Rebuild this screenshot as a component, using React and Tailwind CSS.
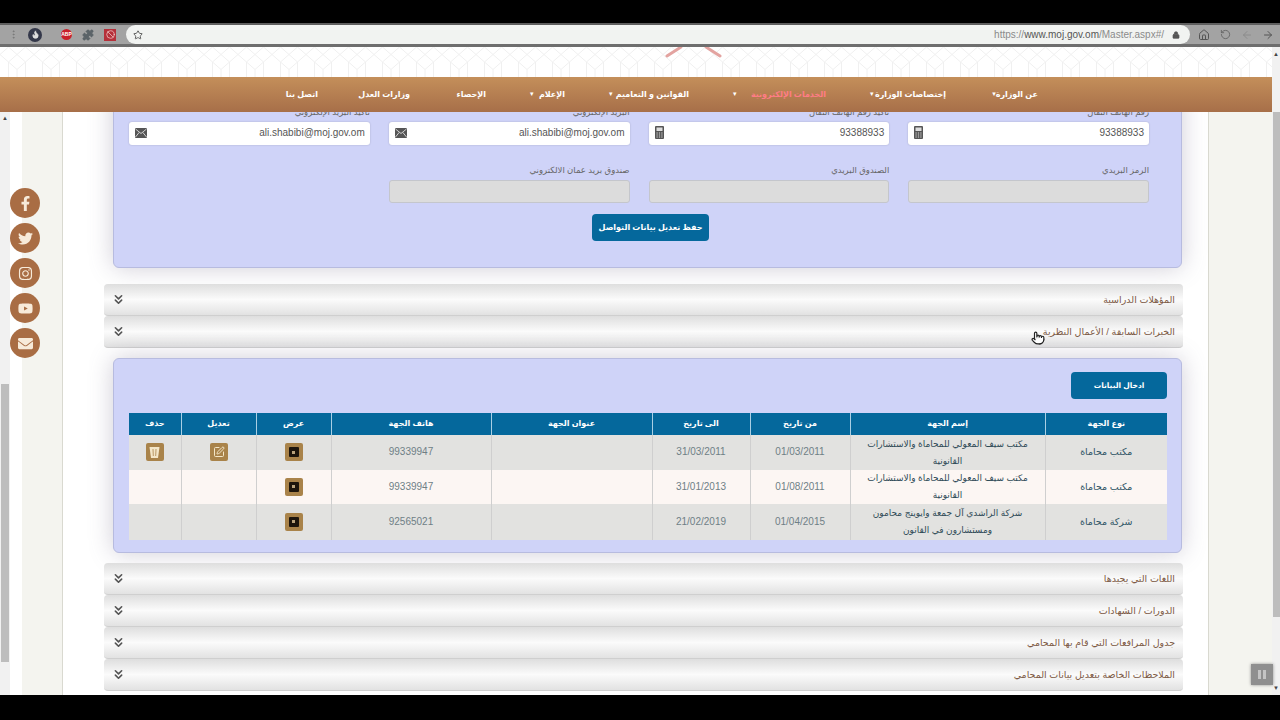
import { ArrowLeft, ArrowRight, Ban, ChevronsDown, EllipsisVertical, Flame, House, Lock, Pointer, Puzzle, RotateCcw, SquarePen, Star } from "lucide-react";
import { FaEnvelope, FaFacebookF, FaInstagram, FaTwitter, FaYoutube } from "react-icons/fa";

const navItems = [
  { label: "عن الوزارة", arrow: true, width: "w-[45px]", color: "text-white" },
  { label: "إختصاصات الوزارة", arrow: true, width: "w-[76px]", color: "text-white" },
  { label: "الخدمات الإلكترونية", arrow: true, width: "w-[93px]", color: "text-[#ff7c86]" },
  { label: "القوانين و التعاميم", arrow: true, width: "w-[80px]", color: "text-white" },
  { label: "الإعلام", arrow: true, width: "w-[35px]", color: "text-white" },
  { label: "الإحصاء", arrow: false, width: "w-[32px]", color: "text-white" },
  { label: "وزارات العدل", arrow: false, width: "w-[48px]", color: "text-white" },
  { label: "اتصل بنا", arrow: false, width: "w-[34px]", color: "text-white" },
];

const contactFields = [
  { label: "رقم الهاتف النقال", value: "93388933", icon: "phone" },
  { label: "تأكيد رقم الهاتف النقال", value: "93388933", icon: "phone" },
  { label: "البريد الإلكتروني", value: "ali.shabibi@moj.gov.om", icon: "mail" },
  { label: "تأكيد البريد الإلكتروني", value: "ali.shabibi@moj.gov.om", icon: "mail" },
];

const postFields = ["الرمز البريدي", "الصندوق البريدي", "صندوق بريد عمان الالكتروني"];

const headers = ["نوع الجهة", "إسم الجهة", "من تاريخ", "الى تاريخ", "عنوان الجهة", "هاتف الجهة", "عرض", "تعديل", "حذف"];

const rows = [
  {
    type: "مكتب محاماة",
    name: "مكتب سيف المعولي للمحاماة والاستشارات القانونية",
    from: "01/03/2011",
    to: "31/03/2011",
    phone: "99339947",
    editable: true,
    bg: "bg-[#e2e2e0]",
    height: "h-[35px]",
  },
  {
    type: "مكتب محاماة",
    name: "مكتب سيف المعولي للمحاماة والاستشارات القانونية",
    from: "01/08/2011",
    to: "31/01/2013",
    phone: "99339947",
    editable: false,
    bg: "bg-[#fcf6f3]",
    height: "h-[34px]",
  },
  {
    type: "شركة محاماة",
    name: "شركة الراشدي آل جمعة وايوينج محامون ومستشارون في القانون",
    from: "01/04/2015",
    to: "21/02/2019",
    phone: "92565021",
    editable: false,
    bg: "bg-[#e2e2e0]",
    height: "h-[36px]",
  },
];

const socials = [FaFacebookF, FaTwitter, FaInstagram, FaYoutube, FaEnvelope];

function PatternStrip() {
  return (
    <svg className="h-full w-full" aria-hidden="true">
      <defs>
        <pattern id="stars" width="34" height="30" patternUnits="userSpaceOnUse">
          <path
            d="M0 7.5 L8.5 0 L17 7.5 L25.5 0 L34 7.5 M0 7.5 L8.5 15 L17 7.5 L25.5 15 L34 7.5 M8.5 15 V30 M25.5 15 V30 M8.5 15 L17 22.5 L25.5 15 M17 22.5 V30"
            fill="none"
            stroke="#f0f0f0"
            strokeWidth="1"
          />
        </pattern>
      </defs>
      <rect width="100%" height="100%" fill="url(#stars)" />
      <path d="M667 9 L681 0 M720 9 L706 0" stroke="#e3a3a0" strokeWidth="3" strokeLinecap="round" />
    </svg>
  );
}

function MailIcon() {
  return (
    <svg width="12" height="10" viewBox="0 0 12 10" aria-hidden="true">
      <rect width="12" height="10" rx="1" fill="#555" />
      <path d="M0.5 1 L6 5.5 L11.5 1 M0.5 9 L4.2 4.4 M11.5 9 L7.8 4.4" fill="none" stroke="#ddd" strokeWidth="0.9" />
    </svg>
  );
}

function PhoneIcon() {
  return (
    <svg width="9" height="13" viewBox="0 0 9 13" aria-hidden="true">
      <rect width="9" height="13" rx="1" fill="#555" />
      <rect x="1.5" y="1.5" width="6" height="3.5" fill="#ddd" />
      <path d="M1.5 7 H7.5 M1.5 9 H7.5 M1.5 11 H7.5" stroke="#ddd" strokeDasharray="1.2 1.2" />
    </svg>
  );
}

function Panel({ className, children }) {
  return (
    <div
      className={`ml-[9px] mr-[1px] rounded-md border border-[#b7bbdf] bg-[#cfd3f8] shadow-[0_0_24px_rgba(110,100,130,0.32)] ${className}`}
    >
      {children}
    </div>
  );
}

function AccordionRow({ title }) {
  return (
    <div className="flex h-8 items-center justify-between rounded-[4px] border-b border-[#cfcfcf] bg-gradient-to-b from-[#dedede] via-[#fbfbfb] to-[#e2e2e2] pl-[7px] pr-[8px]">
      <ChevronsDown size={15} strokeWidth={2.6} className="text-[#555]" />
      <span dir="rtl" className="pt-px text-[9.5px] text-[#7d5a45]">
        {title}
      </span>
    </div>
  );
}

function ActionButton({ kind }) {
  return (
    <div className="mx-auto flex h-[18px] w-[18px] items-center justify-center rounded-[2px] bg-[#a9834a]">
      {kind === "view" && (
        <div className="flex h-[10px] w-[10px] items-center justify-center rounded-[1px] bg-[#1d150c]">
          <div className="h-[3px] w-[3px] bg-[#b9a27c]" />
        </div>
      )}
      {kind === "edit" && <SquarePen size={12} strokeWidth={2} className="text-[#f3e6c8]" />}
      {kind === "delete" && (
        <svg width="11" height="12" viewBox="0 0 11 12" aria-hidden="true">
          <path d="M0.5 1 H10.5 L9 12 H2 Z" fill="#f3e6c8" />
          <path d="M4 3 L4.3 10 M7 3 L6.7 10" stroke="#a9834a" strokeWidth="0.8" />
        </svg>
      )}
    </div>
  );
}

export default function App() {
  return (
    <div className="relative flex h-[720px] w-[1280px] flex-col overflow-hidden bg-black font-['Liberation_Sans','DejaVu_Sans',sans-serif]">
      <div className="h-[23px] shrink-0 bg-black" />

      {/* browser toolbar */}
      <div className="flex h-[24px] shrink-0 items-center border-t-2 border-b-[3px] border-t-[#5f5f5f] border-b-[#6e6e6e] bg-[#a3a3a3] pl-[8px] pr-[5px] text-[#555]">
        <EllipsisVertical size={11} className="mr-[9px] text-[#777]" />
        <div className="flex h-[14px] w-[14px] items-center justify-center rounded-full bg-[#34384a]">
          <Flame size={9} className="fill-[#ddd] text-[#ddd]" />
        </div>
        <div className="ml-[19px] flex h-[11px] w-[11px] items-center justify-center rounded-full bg-[#c9202a] text-[5px] font-bold leading-none text-white">
          ABP
        </div>
        <Puzzle size={12} className="ml-[10px] fill-[#5b6368] text-[#5b6368]" />
        <div className="ml-[10px] flex h-[12px] w-[12px] items-center justify-center bg-[#b5303a]">
          <Ban size={9} className="text-[#f3c9c9]" />
        </div>
        <div className="ml-[10px] flex h-[19px] w-[1064px] items-center rounded-full bg-[#f1f3f1] pl-[7px] pr-[8px]">
          <Star size={10} className="text-[#444]" />
          <span className="ml-auto text-[10px] text-[#8a8a8a]">
            https://<span className="text-[#555]">www.moj.gov.om</span>/Master.aspx#/
          </span>
          <Lock size={8} className="ml-[8px] mr-[2px] fill-[#555] text-[#555]" />
        </div>
        <House size={12} className="ml-[8px]" />
        <RotateCcw size={11} className="ml-[10px] text-[#666]" />
        <ArrowLeft size={12} className="ml-[10px] text-[#8c8c8c]" />
        <ArrowRight size={12} className="ml-[9px]" />
      </div>

      <div className="flex h-[648px] shrink-0">
        <main className="flex w-[1272px] flex-col bg-white">
          <div className="h-[30px] shrink-0 overflow-hidden">
            <PatternStrip />
          </div>

          <nav
            dir="rtl"
            className="z-10 flex h-[35px] shrink-0 items-center gap-11 bg-gradient-to-b from-[#c48f5a] to-[#a76f49] pr-[234px] text-[8px] font-bold"
          >
            {navItems.map((item, i) => (
              <div key={item.label} className={`flex items-center justify-between whitespace-nowrap ${item.width} ${item.color} ${i === 0 ? "ml-[3px]" : ""}`}>
                <span>{item.label}</span>
                {item.arrow && <span className="text-[7px] text-white">▾</span>}
              </div>
            ))}
          </nav>

          <div className="flex min-h-0 flex-1">
            {/* left scrollbar and side strip */}
            <div className="relative flex w-[10px] shrink-0 flex-col items-center bg-[#f1f1f1] pl-px pr-px">
              <span className="mt-[3px] text-[6px] leading-[6px] text-[#444]">▲</span>
              <div className="mt-[263px] h-[278px] w-full bg-[#bdbdbd]" />
            </div>
            <div className="w-[12px] shrink-0 bg-white" />
            <div className="w-[41px] shrink-0 border-r border-[#d9d9d0] bg-[#f4f4ef]" />

            <div className="min-w-0 flex-1 overflow-hidden pl-[41px] pr-[25px]">
              <Panel className="-mt-[24px] pb-[26px] pl-[15px] pr-[32px] pt-[16px]">
                <div dir="rtl" className="grid grid-cols-4 gap-x-[19px]">
                  {contactFields.map((field) => (
                    <div key={field.label + field.icon}>
                      <div className="h-[14px] text-[8.5px] leading-[14px] text-[#666]">{field.label}</div>
                      <div className="mt-[3px] flex h-[23px] items-center justify-between rounded-[3px] bg-white pb-[2px] pl-[6px] pr-[5px] shadow-[0_0_2px_rgba(0,0,0,0.2)]">
                        <span className="text-[10px] text-[#555]">{field.value}</span>
                        {field.icon === "phone" ? <PhoneIcon /> : <MailIcon />}
                      </div>
                    </div>
                  ))}
                </div>
                <div dir="rtl" className="mt-[18px] grid grid-cols-4 gap-x-[19px]">
                  {postFields.map((label) => (
                    <div key={label}>
                      <div className="h-[14px] text-[8.5px] leading-[14px] text-[#666]">{label}</div>
                      <div className="mt-[3px] h-[23px] rounded-[3px] border border-[#c4c6cc] bg-[#dcdcdc]" />
                    </div>
                  ))}
                </div>
                <div className="mt-[11px] flex justify-center pl-[23px]">
                  <button className="h-[27px] w-[117px] rounded-[4px] bg-[#05689c] text-[8px] font-bold text-white" dir="rtl">
                    حفظ تعديل بيانات التواصل
                  </button>
                </div>
              </Panel>

              <div className="mt-4">
                <AccordionRow title="المؤهلات الدراسية" />
                <AccordionRow title="الخبرات السابقة / الأعمال النظرية" />
              </div>

              <Panel className="mt-[10px] pb-[12px] pl-[15px] pr-[14px] pt-[13px]">
                <div className="flex justify-end">
                  <button className="h-[27px] w-[96px] rounded-[4px] bg-[#05689c] text-[7.5px] font-bold text-white" dir="rtl">
                    ادخال البيانات
                  </button>
                </div>
                <table dir="rtl" className="mt-[14px] w-full table-fixed border-collapse text-center">
                  <colgroup>
                    <col className="w-[122px]" />
                    <col className="w-[195px]" />
                    <col className="w-[100px]" />
                    <col className="w-[98px]" />
                    <col className="w-[161px]" />
                    <col className="w-[160px]" />
                    <col className="w-[75px]" />
                    <col className="w-[75px]" />
                    <col className="w-[52px]" />
                  </colgroup>
                  <thead>
                    <tr className="h-[22px] bg-[#05689c]">
                      {headers.map((h) => (
                        <th key={h} className="border-l border-[#a9cfe4] p-0 text-[8px] font-bold text-white last:border-l-0">
                          {h}
                        </th>
                      ))}
                    </tr>
                  </thead>
                  <tbody className="text-[10px] text-[#6f7f86]">
                    {rows.map((row) => (
                      <tr key={row.from} className={`${row.height} ${row.bg}`}>
                        <td className="border-l border-[#cfcfcf] p-0 text-[9.5px] text-[#2f5566]">{row.type}</td>
                        <td className="border-l border-[#cfcfcf] px-4 py-0 text-[9px] leading-[17px] text-[#2f4a57]">{row.name}</td>
                        <td className="border-l border-[#cfcfcf] p-0 pb-[2px]">{row.from}</td>
                        <td className="border-l border-[#cfcfcf] p-0 pb-[2px]">{row.to}</td>
                        <td className="border-l border-[#cfcfcf] p-0" />
                        <td className="border-l border-[#cfcfcf] p-0 pb-[2px]">{row.phone}</td>
                        <td className="border-l border-[#cfcfcf] p-0 pb-px">
                          <ActionButton kind="view" />
                        </td>
                        <td className="border-l border-[#cfcfcf] p-0 pb-px">{row.editable && <ActionButton kind="edit" />}</td>
                        <td className="p-0 pb-px">{row.editable && <ActionButton kind="delete" />}</td>
                      </tr>
                    ))}
                  </tbody>
                </table>
              </Panel>

              <div className="mt-[10px]">
                <AccordionRow title="اللغات التي يجيدها" />
                <AccordionRow title="الدورات / الشهادات" />
                <AccordionRow title="جدول المرافعات التي قام بها المحامي" />
                <AccordionRow title="الملاحظات الخاصة بتعديل بيانات المحامي" />
              </div>
            </div>

            <div className="w-[64px] shrink-0 border-l border-[#d9d9d0] bg-[#f4f4ef]" />
          </div>
        </main>

        {/* right scrollbar */}
        <div className="flex w-[8px] shrink-0 flex-col items-center bg-[#f1f1f1]">
          <span className="mt-[4px] text-[6px] leading-[6px] text-[#444]">▲</span>
          <div className="ml-px mt-[55px] h-[505px] w-[7px] bg-[#bdbdbd]" />
          <span className="mt-[68px] text-[6px] leading-[6px] text-[#444]">▼</span>
        </div>
      </div>

      {/* floating social buttons */}
      <div className="absolute left-[10px] top-[188px] flex flex-col gap-[5px]">
        {socials.map((Icon, i) => (
          <div key={i} className="flex h-[30px] w-[30px] items-center justify-center rounded-full bg-[#a96d44] text-[#f7ead9]">
            <Icon size={15} />
          </div>
        ))}
      </div>

      {/* mouse cursor */}
      <Pointer size={14} className="absolute left-[1031px] top-[331px] fill-white text-[#222]" />

      {/* video pause control */}
      <div className="absolute left-[1251px] top-[664px] flex h-[21px] w-[22px] items-center justify-center gap-[2px] bg-[#8f8f8f] shadow-[0_0_3px_rgba(0,0,0,0.4)]">
        <div className="h-[9px] w-[3px] bg-[#c4c4c4]" />
        <div className="h-[9px] w-[3px] bg-[#c4c4c4]" />
      </div>
    </div>
  );
}
